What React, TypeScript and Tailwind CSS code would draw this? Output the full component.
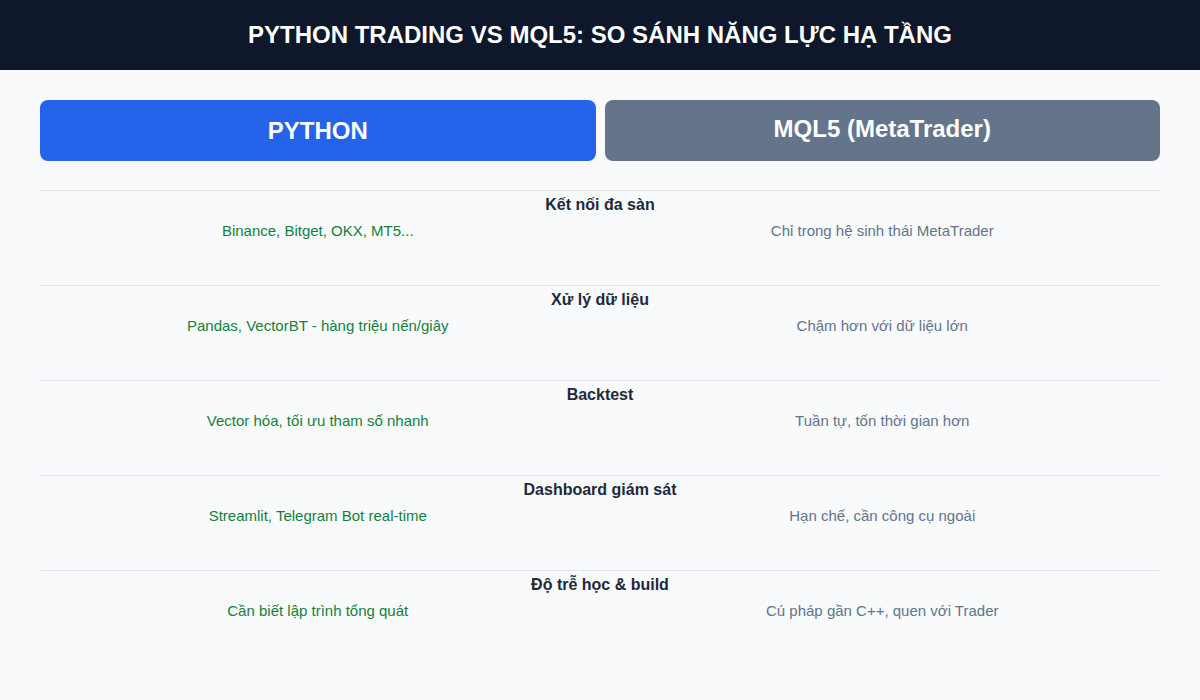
const rows = [
  {
    label: 'Kết nối đa sàn',
    python: 'Binance, Bitget, OKX, MT5...',
    mql: 'Chỉ trong hệ sinh thái MetaTrader',
  },
  {
    label: 'Xử lý dữ liệu',
    python: 'Pandas, VectorBT - hàng triệu nến/giây',
    mql: 'Chậm hơn với dữ liệu lớn',
  },
  {
    label: 'Backtest',
    python: 'Vector hóa, tối ưu tham số nhanh',
    mql: 'Tuần tự, tốn thời gian hơn',
  },
  {
    label: 'Dashboard giám sát',
    python: 'Streamlit, Telegram Bot real-time',
    mql: 'Hạn chế, cần công cụ ngoài',
  },
  {
    label: 'Độ trễ học & build',
    python: 'Cần biết lập trình tổng quát',
    mql: 'Cú pháp gần C++, quen với Trader',
  },
]

export default function App() {
  return (
    <div className="min-h-[700px] w-[1200px] bg-[#f8fafc] font-['Liberation_Sans',Arial,sans-serif]">
      <header className="flex h-[70px] items-center justify-center bg-[#0f172a]">
        <h1 className="text-[24px] font-bold text-white">
          PYTHON TRADING VS MQL5: SO SÁNH NĂNG LỰC HẠ TẦNG
        </h1>
      </header>

      <main className="px-10 pt-[30px]">
        <div className="grid grid-cols-2 gap-[9px]">
          <div className="flex h-[61px] items-center justify-center rounded-lg bg-[#2563eb] text-[24px] font-bold text-white">
            PYTHON
          </div>
          <div className="flex h-[61px] items-center justify-center rounded-lg bg-[#64748b] pb-[3px] text-[24px] font-bold text-white">
            MQL5 (MetaTrader)
          </div>
        </div>

        <div className="mt-[29px]">
          {rows.map((r) => (
            <div key={r.label} className="h-[95px] border-t border-[#e2e8f0] pt-[4px]">
              <div className="text-center text-[16px] font-bold leading-[20px] text-[#1e293b]">
                {r.label}
              </div>
              <div className="grid grid-cols-2 gap-[9px] text-[15px] leading-[18px]">
                <div className="pt-[7px] text-center text-[#15803d]">{r.python}</div>
                <div className="pt-[7px] text-center text-[#64748b]">{r.mql}</div>
              </div>
            </div>
          ))}
        </div>
      </main>
    </div>
  )
}
